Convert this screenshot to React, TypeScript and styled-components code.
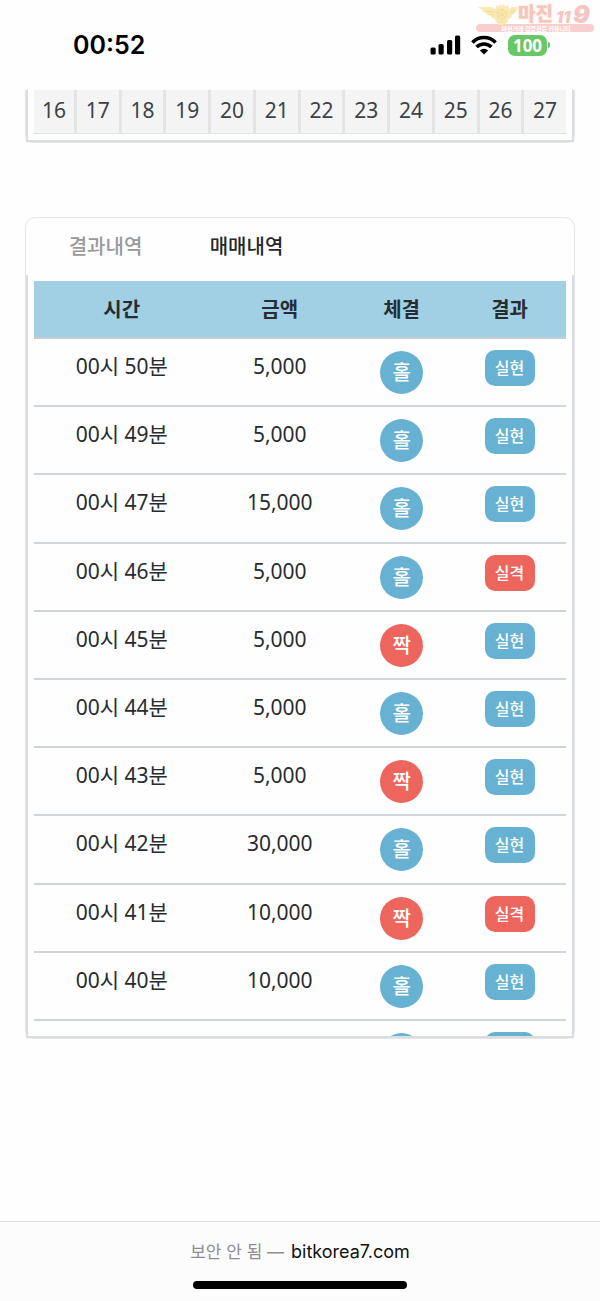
import React from "react";
import styled, { createGlobalStyle } from "styled-components";

const GlobalStyle = createGlobalStyle`
  *, *::before, *::after { box-sizing: border-box; }
  html, body { margin: 0; padding: 0; background: #fefefe; }
  body {
    font-family: "Noto Sans", "Noto Sans CJK KR", sans-serif;
    color: #282c30;
  }
`;

const blue = "#67b1d3";
const red = "#ed665e";

const Screen = styled.div`
  position: relative;
  display: flex;
  flex-direction: column;
  height: 100vh;
  min-height: 600px;
`;

const StatusBar = styled.header`
  display: flex;
  flex: none;
  align-items: center;
  justify-content: space-between;
  height: 90px;
  padding: 0 50px 0 73px;
  font-family: Inter, sans-serif;
`;

const Clock = styled.time`
  font-size: 25px;
  font-weight: 600;
  line-height: 32px;
  color: #000;
`;

const Indicators = styled.div`
  display: flex;
  align-items: center;
`;

const SignalIcon = styled.svg`
  display: block;
  margin-right: 10px;
`;

const WifiIcon = styled.svg`
  display: block;
  margin-right: 11px;
`;

const Battery = styled.div`
  display: flex;
  align-items: center;
  gap: 1px;
`;

const BatteryLevel = styled.span`
  width: 39px;
  border-radius: 7px;
  background: #68c766;
  color: #fff;
  font-family: "Noto Sans", sans-serif;
  font-size: 17px;
  font-weight: 700;
  line-height: 21px;
  text-align: center;
`;

const BatteryTip = styled.span`
  width: 2px;
  height: 6px;
  border-radius: 0 2px 2px 0;
  background: #68c766;
`;

const Watermark = styled.svg`
  position: absolute;
  top: 0;
  right: 5px;
`;

const Main = styled.main`
  display: flex;
  flex: 1;
  flex-direction: column;
  gap: 74px;
  min-height: 0;
  padding: 0 25px 182px;
`;

const Card = styled.section<{ $open?: boolean }>`
  display: flex;
  flex: ${(p) => (p.$open ? "none" : "1")};
  flex-direction: column;
  min-height: 0;
  border: 1px solid #e4e5e6;
  border-top-width: ${(p) => (p.$open ? "0" : "1px")};
  border-radius: ${(p) => (p.$open ? "0 0 8px 8px" : "10px 10px 8px 8px")};
  box-shadow: 0 0 1px #e4e5e6;
`;

const Panel = styled.div`
  flex: 1;
  min-height: 0;
  overflow: hidden;
  padding: 6px 6px 0;
  border: 2px solid #d9dde1;
  border-top: 0;
`;

const NumberPanel = styled(Panel)`
  padding: 0 6px 6px;
`;

const NumberGrid = styled.ol`
  display: grid;
  grid-template-columns: 40px repeat(11, 1fr);
  gap: 3px;
  margin: 0;
  padding: 0;
  border-bottom: 1px solid #e2e2e2;
  background: #e4e4e4;
  list-style: none;
`;

const NumberCell = styled.li`
  height: 43px;
  background: #f4f4f4;
  color: #3c4248;
  font-size: 21px;
  line-height: 40px;
  text-align: center;
`;

const Tabs = styled.nav`
  display: flex;
  flex: none;
  height: 57px;
  padding-left: 9px;
`;

const Tab = styled.button<{ $active?: boolean }>`
  width: 141px;
  padding: 0;
  border: 0;
  background: none;
  color: ${(p) => (p.$active ? "#24282c" : "#999")};
  font: inherit;
  font-size: 20px;
  font-weight: 500;
  line-height: 32px;
  text-align: center;
  cursor: pointer;
`;

const Table = styled.table`
  width: 100%;
  border-collapse: separate;
  border-spacing: 0;
  table-layout: fixed;
`;

const Column = styled.col<{ $share: number }>`
  width: ${(p) => p.$share}%;
`;

const HeadCell = styled.th`
  height: 58px;
  padding: 1px 0 0;
  border-bottom: 2px solid #c6ced3;
  background: #a1d0e4;
  font-size: 20px;
  font-weight: 700;
  line-height: 32px;
`;

const Row = styled.tr`
  height: 68px;

  &:nth-child(5n + 3) {
    height: 69px;
  }
`;

const Cell = styled.td`
  padding: 11px 0 0;
  border-bottom: 2px solid #d0d5d9;
  font-size: 21px;
  line-height: 32px;
  text-align: center;
  vertical-align: top;
`;

const Pick = styled.span<{ $color: string }>`
  display: block;
  width: 43px;
  height: 43px;
  margin: 1px auto 0;
  border-radius: 50%;
  background: ${(p) => p.$color};
  color: #fff;
  font-size: 20px;
  font-weight: 500;
  line-height: 44px;
`;

const Result = styled.span<{ $color: string }>`
  display: block;
  width: 50px;
  height: 36px;
  margin: 0 auto;
  border-radius: 10px;
  background: ${(p) => p.$color};
  color: #fff;
  font-size: 16px;
  font-weight: 500;
  line-height: 36px;
`;

const AddressBar = styled.footer`
  display: flex;
  flex: none;
  flex-direction: column;
  align-items: center;
  justify-content: space-between;
  height: 80px;
  padding: 17px 0 12px;
  border-top: 1px solid #e0e0e0;
  background: #fcfcfc;
`;

const Address = styled.p`
  display: flex;
  gap: 7px;
  margin: 0;
  font-family: Inter, "Noto Sans CJK KR", sans-serif;
  font-size: 17px;
  line-height: 26px;
  color: #8e8e92;
`;

const Host = styled.a`
  color: #111;
  font-size: 18px;
  text-decoration: none;
`;

const HomeIndicator = styled.div`
  width: 214px;
  height: 8px;
  border-radius: 4px;
  background: #000;
`;

const numbers = [16, 17, 18, 19, 20, 21, 22, 23, 24, 25, 26, 27];

type Trade = { time: string; amount: string; pick: string; result: string };

const trades: Trade[] = [
  { time: "00시 50분", amount: "5,000", pick: "홀", result: "실현" },
  { time: "00시 49분", amount: "5,000", pick: "홀", result: "실현" },
  { time: "00시 47분", amount: "15,000", pick: "홀", result: "실현" },
  { time: "00시 46분", amount: "5,000", pick: "홀", result: "실격" },
  { time: "00시 45분", amount: "5,000", pick: "짝", result: "실현" },
  { time: "00시 44분", amount: "5,000", pick: "홀", result: "실현" },
  { time: "00시 43분", amount: "5,000", pick: "짝", result: "실현" },
  { time: "00시 42분", amount: "30,000", pick: "홀", result: "실현" },
  { time: "00시 41분", amount: "10,000", pick: "짝", result: "실격" },
  { time: "00시 40분", amount: "10,000", pick: "홀", result: "실현" },
  { time: "", amount: "", pick: "", result: "" },
];

function Logo() {
  return (
    <Watermark width="120" height="34" viewBox="0 0 120 34" role="img" aria-label="마진119">
      <rect x="1" y="24" width="118" height="8" rx="4" fill="#f9cfce" />
      <path
        fill="#f9e9b4"
        d="M3 7 L16 7 L20 9 L22 5 L24 7 L25 4 L27 6 L29 4 L30 7 L33 5 L34 9 L37 7 L43 7 L42 10 L40 13 L37 15 L36 18 L33 19 L33 22 L29 25 L24 25 L21 22 L20 19 L17 18 L16 16 L12 15 L11 13 L8 12 L7 10 Z"
      />
      <path
        fill="none"
        stroke="#f0dc98"
        d="M11 11 L19 12 M14 14 L19 15 M35 12 L40 11 M22 12 L27 9 L32 12 L31 17 L27 20 L23 17 Z M27 9 V20 M22 12 L31 17 M32 12 L23 17 M24 22 H30"
      />
      <text x="43" y="21" fontSize="19" fontWeight="900" fill="#f6c4c1" stroke="#fdf3e3" strokeWidth="2" paintOrder="stroke" fontFamily="Noto Sans CJK KR, sans-serif">
        마진
      </text>
      <text x="81" y="23" fontSize="16" fontWeight="900" fontStyle="italic" fill="#f6c4c1" fontFamily="Inter, sans-serif">
        11
      </text>
      <text x="98" y="23" fontSize="25" fontWeight="900" fontStyle="italic" fill="#f6c4c1" fontFamily="Inter, sans-serif">
        9
      </text>
      <text x="61" y="31" fontSize="6" fontWeight="700" fill="#fff" textAnchor="middle" fontFamily="Noto Sans CJK KR, sans-serif">
        마진거래 검증전문 커뮤니티
      </text>
    </Watermark>
  );
}

export default function App() {
  return (
    <>
      <GlobalStyle />
      <Screen>
        <StatusBar>
          <Clock>00:52</Clock>
          <Indicators>
            <SignalIcon width="31" height="20" viewBox="0 0 31 20" aria-hidden="true">
              <rect x="0.5" y="12.5" width="5.2" height="7" rx="1.5" />
              <rect x="8.5" y="9" width="5.2" height="10.5" rx="1.5" />
              <rect x="17" y="5" width="5.2" height="14.5" rx="1.5" />
              <rect x="25" y="0.5" width="5.2" height="19" rx="1.5" />
            </SignalIcon>
            <WifiIcon width="26" height="20" viewBox="0 0 26 20" aria-hidden="true">
              <g fill="none" stroke="#000" strokeWidth="3.5">
                <path d="M1.4 7.4 A16.4 16.4 0 0 1 24.6 7.4" />
                <path d="M5.6 12 A10.6 10.6 0 0 1 20.4 12" />
              </g>
              <path d="M8.9 15.4 A6.2 6.2 0 0 1 17.1 15.4 L13 19.4 Z" />
            </WifiIcon>
            <Battery>
              <BatteryLevel>100</BatteryLevel>
              <BatteryTip />
            </Battery>
          </Indicators>
        </StatusBar>

        <Main>
          <Card $open>
            <NumberPanel>
              <NumberGrid>
                {numbers.map((n) => (
                  <NumberCell key={n}>{n}</NumberCell>
                ))}
              </NumberGrid>
            </NumberPanel>
          </Card>

          <Card>
            <Tabs>
              <Tab type="button">결과내역</Tab>
              <Tab type="button" $active>
                매매내역
              </Tab>
            </Tabs>
            <Panel>
              <Table>
                <colgroup>
                  <Column $share={33} />
                  <Column $share={26.4} />
                  <Column $share={19.4} />
                  <Column $share={21.2} />
                </colgroup>
                <thead>
                  <tr>
                    <HeadCell scope="col">시간</HeadCell>
                    <HeadCell scope="col">금액</HeadCell>
                    <HeadCell scope="col">체결</HeadCell>
                    <HeadCell scope="col">결과</HeadCell>
                  </tr>
                </thead>
                <tbody>
                  {trades.map((t, i) => (
                    <Row key={i}>
                      <Cell>{t.time}</Cell>
                      <Cell>{t.amount}</Cell>
                      <Cell>
                        <Pick $color={t.pick === "짝" ? red : blue}>{t.pick}</Pick>
                      </Cell>
                      <Cell>
                        <Result $color={t.result === "실격" ? red : blue}>{t.result}</Result>
                      </Cell>
                    </Row>
                  ))}
                </tbody>
              </Table>
            </Panel>
          </Card>
        </Main>

        <AddressBar>
          <Address>
            <span>보안 안 됨 —</span>
            <Host href="#">bitkorea7.com</Host>
          </Address>
          <HomeIndicator />
        </AddressBar>
        <Logo />
      </Screen>
    </>
  );
}
